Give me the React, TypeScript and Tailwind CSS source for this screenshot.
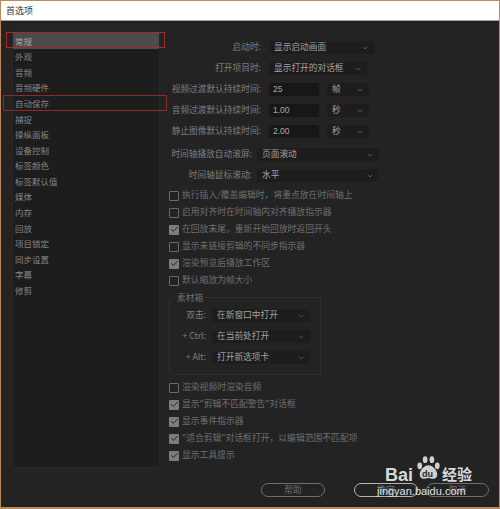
import React from 'react'
import { ChevronDown, Check } from 'lucide-react'

const listItems = ['常规', '外观', '音频', '音频硬件', '自动保存', '捕捉', '操纵面板', '设备控制', '标签颜色', '标签默认值', '媒体', '内存', '回放', '项目锁定', '同步设置', '字幕', '修剪']

const topChecks: [string, boolean][] = [
  ['执行插入/覆盖编辑时，将重点放在时间轴上', false],
  ['启用对齐时在时间轴内对齐播放指示器', false],
  ['在回放末尾，重新开始回放时返回开头', true],
  ['显示未链接剪辑的不同步指示器', false],
  ['渲染预览后播放工作区', true],
  ['默认缩放为帧大小', false],
]

const bottomChecks: [string, boolean][] = [
  ['渲染视频时渲染音频', false],
  ['显示"剪辑不匹配警告"对话框', true],
  ['显示事件指示器', true],
  ['"适合剪辑"对话框打开，以编辑范围不匹配项', true],
  ['显示工具提示', true],
]

function Select({ value, width }: { value: string; width: string }) {
  return (
    <div className={`${width} h-[13px] bg-[#1d1d1d] flex items-center justify-between pl-[5px] pr-[5px] text-[#a2a2a2]`}>
      <span>{value}</span>
      <ChevronDown size={8} strokeWidth={1.5} className="text-[#8a8a8a]" />
    </div>
  )
}

function Label({ text, width }: { text: string; width: string }) {
  return <span className={`${width} flex justify-end text-[#7f7f7f] whitespace-nowrap shrink-0`}>{text}</span>
}

function CheckRow({ text, checked }: { text: string; checked: boolean }) {
  return (
    <div className="h-[17px] flex items-center gap-[3px] text-[8.8px] text-[#6f6f6f] whitespace-nowrap">
      {checked ? (
        <div className="w-[10px] h-[10px] bg-[#7d7d7d] rounded-[1px] flex items-center justify-center shrink-0">
          <Check size={9} strokeWidth={2.5} className="text-[#1e1e1e]" />
        </div>
      ) : (
        <div className="w-[10px] h-[10px] border border-[#6a6a6a] rounded-[1px] shrink-0" />
      )}
      <span>{text}</span>
    </div>
  )
}

function TimeRow({ label, value, unit }: { label: string; value: string; unit: string }) {
  return (
    <div className="flex items-center h-[13px] mt-[8px]">
      <Label text={label} width="w-[92px]" />
      <div className="w-[50px] h-[13px] ml-[8px] bg-[#171717] text-[#a8a8a8] pl-[4px] flex items-center font-['Liberation_Sans'] text-[8.5px]">{value}</div>
      <div className="ml-[8px]">
        <Select value={unit} width="w-[42px]" />
      </div>
    </div>
  )
}

function Button({ text, width, primary }: { text: string; width: string; primary?: boolean }) {
  return (
    <div className={`${width} h-[14px] rounded-full border flex items-center justify-center text-[#6f6f6f] ${primary ? 'border-[#b4b4b4]' : 'border-[#6e6e6e]'}`}>
      {text}
    </div>
  )
}

export default function App() {
  return (
    <div className="relative w-[500px] h-[509px] overflow-hidden flex flex-col bg-[#232323] border-l border-r border-b-2 border-t border-[#b98a5e] text-[8.7px] leading-none font-['Noto_Sans_CJK_SC','Noto_Sans',sans-serif]">
      <div className="h-[20px] shrink-0 bg-white border-b border-[#a0a0a0] flex items-center pl-[5px] text-[9px] text-[#333]">首选项</div>

      <div className="flex flex-1">
        <div className="w-[148px] h-[437px] ml-[11px] mt-[10px] bg-[#1d1d1d] border border-[#272727] pt-[1px] shrink-0">
          {listItems.map((item, i) => (
            <div key={item} className={`h-[15.6px] flex items-center pl-[2px] text-[8.5px] ${i === 0 ? 'bg-[#4b4b4b] text-[#a8a8a8]' : 'text-[#858585]'}`}>
              {item}
            </div>
          ))}
        </div>

        <div className="flex-1 pl-[9px] pt-[20px] min-w-0">
          <div className="flex items-center h-[13px]">
            <Label text="启动时:" width="w-[92px]" />
            <div className="ml-[8px]"><Select value="显示启动画面" width="w-[105px]" /></div>
          </div>
          <div className="flex items-center h-[13px] mt-[8px]">
            <Label text="打开项目时:" width="w-[92px]" />
            <div className="ml-[8px]"><Select value="显示打开的对话框" width="w-[98px]" /></div>
          </div>
          <TimeRow label="视频过渡默认持续时间:" value="25" unit="帧" />
          <TimeRow label="音频过渡默认持续时间:" value="1.00" unit="秒" />
          <TimeRow label="静止图像默认持续时间:" value="2.00" unit="秒" />

          <div className="flex items-center h-[13px] mt-[10px]">
            <Label text="时间轴播放自动滚屏:" width="w-[83px]" />
            <div className="ml-[5px]"><Select value="页面滚动" width="w-[122px]" /></div>
          </div>
          <div className="flex items-center h-[13px] mt-[8px]">
            <Label text="时间轴鼠标滚动:" width="w-[83px]" />
            <div className="ml-[5px]"><Select value="水平" width="w-[122px]" /></div>
          </div>

          <div className="mt-[5px]">
            {topChecks.map(([text, checked]) => <CheckRow key={text} text={text} checked={checked} />)}
          </div>

          <div className="relative w-[152px] h-[78px] mt-[8px] border border-[#2e2e2e] rounded-[2px] pt-[11px] flex flex-col gap-[8px]">
            <span className="absolute left-[6px] -top-[4px] bg-[#232323] px-[1px] text-[#6f6f6f]">素材箱</span>
            {[['双击:', '在新窗口中打开'], ['+ Ctrl:', '在当前处打开'], ['+ Alt:', '打开新选项卡']].map(([label, value]) => (
              <div key={label} className="flex items-center h-[13px]">
                <Label text={label} width="w-[36px]" />
                <div className="ml-[6px]"><Select value={value} width="w-[98px]" /></div>
              </div>
            ))}
          </div>

          <div className="mt-[4px]">
            {bottomChecks.map(([text, checked]) => <CheckRow key={text} text={text} checked={checked} />)}
          </div>

          <div className="flex mt-[19px] ml-[92px]">
            <Button text="帮助" width="w-[64px]" />
            <div className="ml-[29px]"><Button text="确定" width="w-[64px]" primary /></div>
            <div className="ml-[8px]"><Button text="取消" width="w-[63px]" /></div>
          </div>
        </div>
      </div>

      {/* red annotation boxes */}
      <div className="absolute left-[5px] top-[31px] w-[159px] h-[16px] border border-[#a52a2a]" />
      <div className="absolute left-[2px] top-[94px] w-[164px] h-[16px] border border-[#8f2a2a]" />

      {/* watermark */}
      <div className="absolute left-[376px] top-[453px] w-[115px] h-[50px] text-[#d8d8d8]">
        <svg viewBox="0 0 40 36" className="absolute left-[38px] top-[1px] w-[27px] h-[27px]" fill="#d0d0d0">
          <ellipse cx="7" cy="14" rx="3.5" ry="5" />
          <ellipse cx="15" cy="5" rx="3.5" ry="5" />
          <ellipse cx="25" cy="5" rx="3.5" ry="5" />
          <ellipse cx="33" cy="14" rx="3.5" ry="5" />
          <path d="M20 13c-6 0-13 7-13 14 0 5 4 7 8 6 3-1 7-1 10 0 4 1 8-1 8-6 0-7-7-14-13-14z" />
        </svg>
        <span className="absolute left-[8px] top-[12px] text-[18px] font-bold font-['Liberation_Sans']">Bai</span>
        <span className="absolute left-[45px] top-[16px] text-[9px] font-bold text-[#2a2a2a] font-['Liberation_Sans']">du</span>
        <span className="absolute left-[65px] top-[12px] text-[15px] font-bold">经验</span>
        <span className="absolute left-[0px] top-[32px] text-[11px] font-['Liberation_Sans'] text-[#e0e0e0] whitespace-nowrap">jingyan.baidu.com</span>
      </div>
    </div>
  )
}
